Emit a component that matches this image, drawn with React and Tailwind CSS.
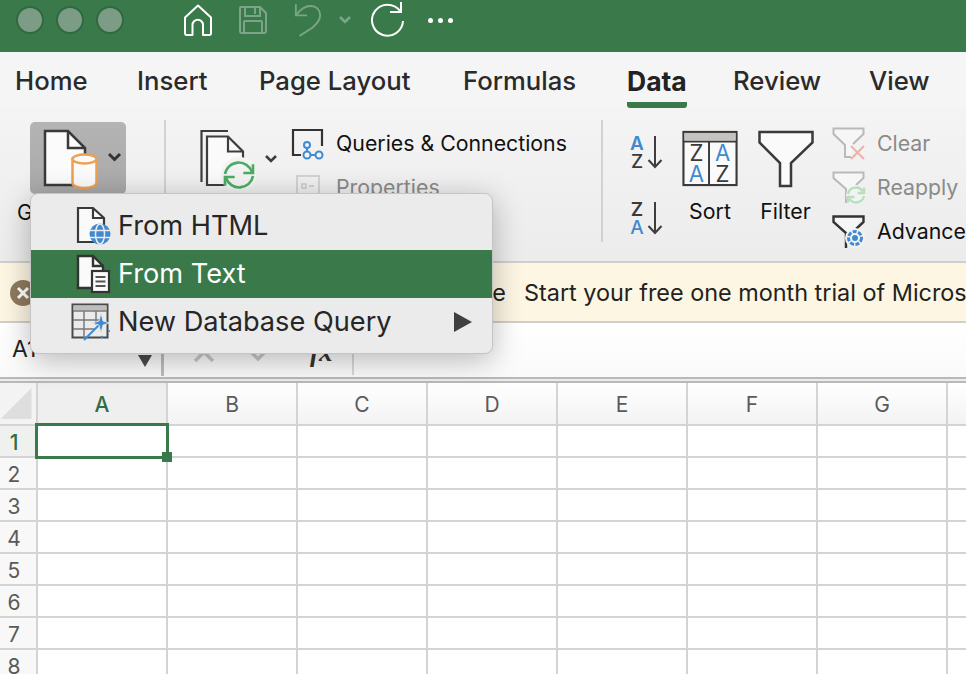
import React from 'react';

const tabs = [
  { label: 'Home', width: 'w-[122px]' },
  { label: 'Insert', width: 'w-[122px]' },
  { label: 'Page Layout', width: 'w-[204px]' },
  { label: 'Formulas', width: 'w-[164px]' },
  { label: 'Data', width: 'w-[106px]', active: true },
  { label: 'Review', width: 'w-[136px]' },
  { label: 'View', width: 'w-[80px]' },
];

const columns = ['A', 'B', 'C', 'D', 'E', 'F', 'G', 'H'];
const rows = [1, 2, 3, 4, 5, 6, 7, 8];

const Chevron = ({ className = '', color = '#3d3d3d' }) => (
  <svg width="14" height="10" viewBox="0 0 14 10" className={className}>
    <path d="M2 2l5 5 5-5" fill="none" stroke={color} strokeWidth="2.6" />
  </svg>
);

const SyncArrows = ({ cx, cy, r, color, width = 2.4 }) => {
  const h = r * 0.55;
  return (
    <g fill="none" stroke={color} strokeWidth={width}>
      <path d={`M${cx - r} ${cy - 1}A${r} ${r} 0 0 1 ${cx + r - 1} ${cy - 3}`} />
      <path d={`M${cx + r} ${cy + 1}A${r} ${r} 0 0 1 ${cx - r + 1} ${cy + 3}`} />
      <path d={`M${cx + r} ${cy - 3 - h}V${cy - 2}H${cx + r - h - 2}`} />
      <path d={`M${cx - r} ${cy + 3 + h}V${cy + 2}H${cx - r + h + 2}`} />
    </g>
  );
};

const TrafficLight = () => (
  <div className="w-[28px] h-[28px] rounded-full bg-[#7d9c85] border-2 border-[#2f6a40]"></div>
);

const HomeIcon = () => (
  <svg width="30" height="32" viewBox="0 0 30 32">
    <path d="M15 1.5L2 13.5V29.5a1.5 1.5 0 0 0 1.5 1.5H9.5V21a5 5 0 0 1 10.500 0V31h6.500a1.500 1.500 0 0 0 1.500-1.500V13.500Z" fill="none" stroke="#fff" strokeWidth="2" strokeLinejoin="round" />
  </svg>
);

const SaveIcon = () => (
  <svg width="30" height="30" viewBox="0 0 30 30" fill="none" stroke="#7ba586" strokeWidth="2">
    <path d="M3 2H22L28 8V26a2 2 0 0 1-2 2H4a2 2 0 0 1-2-2V3a1 1 0 0 1 1-1Z" />
    <path d="M7 2V11H22V2M17 3V9" />
    <path d="M6 28V17a1 1 0 0 1 1-1H23a1 1 0 0 1 1 1V28" />
  </svg>
);

const UndoIcon = () => (
  <svg width="28" height="36" viewBox="0 0 30 36" fill="none" stroke="#7ba586" strokeWidth="2">
    <path d="M2 1V13H14" />
    <path d="M2 13C7 6 13 3 18 3c6 0 10 4 10 10 0 5-3 8-8 13L6 35" />
  </svg>
);

const RedoIcon = () => (
  <svg width="34" height="36" viewBox="0 0 34 36" fill="none" stroke="#fff" strokeWidth="2">
    <path d="M29 9A15.500 15.500 0 1 0 32 19" />
    <path d="M30 0V10H19" />
  </svg>
);

const GetDataIcon = () => (
  <svg width="96" height="72" viewBox="0 0 96 72">
    <path d="M15 9H38L55 26V63H15Z" fill="#fbfbfb" stroke="#3a3a3a" strokeWidth="2.500" />
    <path d="M38 9V26H55" fill="none" stroke="#3a3a3a" strokeWidth="2.500" />
    <path d="M42.500 37V61c0 3 6 5 12 5s12-2 12-5V37Z" fill="#fbfbfb" stroke="#ee9f50" strokeWidth="2.500" />
    <ellipse cx="54.500" cy="37" rx="12" ry="4.500" fill="#fbfbfb" stroke="#ee9f50" strokeWidth="2.500" />
    <path d="M79 32l5.500 5.500L90 32" fill="none" stroke="#333" strokeWidth="3" />
  </svg>
);

const ConnectionsIcon = () => (
  <svg width="62" height="62" viewBox="0 0 62 62">
    <path d="M28 2H1.500V53" fill="none" stroke="#3d3d3d" strokeWidth="2.200" />
    <path d="M7 7.500H28L43 22.500V56H7Z" fill="#fafafa" stroke="#3d3d3d" strokeWidth="2.200" />
    <path d="M28 7.500V22.500H43" fill="none" stroke="#3d3d3d" strokeWidth="2.200" />
    <circle cx="39" cy="46" r="18" fill="#f3f3f3" />
    <SyncArrows cx={39} cy={46} r={14} color="#4cab62" width={2.600} />
  </svg>
);

const QueriesIcon = () => (
  <svg width="34" height="32" viewBox="0 0 34 32" fill="none">
    <path d="M31 18V2H2V27H10" stroke="#333" strokeWidth="2.200" />
    <g stroke="#3f8ad0" strokeWidth="2">
      <circle cx="16" cy="17" r="3" fill="#f3f3f3" />
      <circle cx="16" cy="27" r="3.500" fill="#f3f3f3" />
      <circle cx="28" cy="27" r="3.500" fill="#f3f3f3" />
      <path d="M16 20V23.500M19.500 27H24.500" />
    </g>
  </svg>
);

const PropertiesIcon = () => (
  <svg width="24" height="26" viewBox="0 0 24 26" fill="none" stroke="#c9c9c9" strokeWidth="1.500" className="ml-[5px]">
    <path d="M1 26V1H23V26" />
    <path d="M6 9H10V13H6ZM6 19H10V23H6ZM13 11H18M13 21H18" />
  </svg>
);

const SortLettersIcon = ({ top, bottom, topColor, bottomColor }) => (
  <svg width="36" height="38" viewBox="0 0 36 38">
    <text x="7" y="15" textAnchor="middle" fontFamily="Inter, sans-serif" fontWeight="600" fontSize="19" fill={topColor}>{top}</text>
    <text x="7" y="33" textAnchor="middle" fontFamily="Inter, sans-serif" fontWeight="500" fontSize="19" fill={bottomColor}>{bottom}</text>
    <path d="M25 1V32M18.500 25L25 32L31.500 25" fill="none" stroke="#3d3d3d" strokeWidth="2" />
  </svg>
);

const SortIcon = () => (
  <svg width="56" height="57" viewBox="0 0 58 58" fontFamily="Inter, sans-serif" fontSize="23" textAnchor="middle">
    <rect x="1.500" y="1.500" width="55" height="55" fill="#fafafa" stroke="#3a3a3a" strokeWidth="2.200" />
    <rect x="2.500" y="2.500" width="53" height="8" fill="#c4c3bf" />
    <path d="M1 11.500H57M28 11.500V57" stroke="#3a3a3a" strokeWidth="2" />
    <text x="15" y="32" fill="#3a3a3a">Z</text>
    <text x="15" y="53" fill="#3f8ad0">A</text>
    <text x="42" y="32" fill="#3f8ad0">A</text>
    <text x="42" y="53" fill="#3a3a3a">Z</text>
  </svg>
);

const FilterIcon = () => (
  <svg width="56" height="58" viewBox="0 0 56 58">
    <path d="M1.500 2H54.500V12.500L33 33V56H22V33L1.500 12.500Z" fill="#fafafa" stroke="#3a3a3a" strokeWidth="2.500" />
  </svg>
);

const ClearIcon = () => (
  <svg width="34" height="34" viewBox="0 0 34 34" fill="none">
    <path d="M19 30H13V18L1.500 7V1.500H31.500V7L21 17" stroke="#b9b9b9" strokeWidth="2" fill="#f6f6f6" />
    <path d="M19 19L32 32M32 19L19 32" stroke="#e8b4ac" strokeWidth="2" />
  </svg>
);

const ReapplyIcon = () => (
  <svg width="34" height="34" viewBox="0 0 34 34" fill="none">
    <path d="M14 32V18L1.500 7V1.500H31.500V7L24 14" stroke="#b9b9b9" strokeWidth="2" fill="#f6f6f6" />
    <circle cx="24" cy="24" r="10" fill="#f3f3f3" />
    <SyncArrows cx={24} cy={24} r={8} color="#b8dfc0" width={2.400} />
  </svg>
);

const AdvancedIcon = () => (
  <svg width="34" height="34" viewBox="0 0 34 34" fill="none">
    <path d="M14 33V18L1.500 7V1.500H31.500V7L24 14" stroke="#333" strokeWidth="2.400" fill="#f6f6f6" />
    <circle cx="23" cy="23" r="10" fill="#f3f3f3" />
    <circle cx="23" cy="23" r="6.500" stroke="#3f8ad0" strokeWidth="3" strokeDasharray="4 1.500" />
    <circle cx="23" cy="23" r="3" fill="#3f8ad0" />
  </svg>
);

const HtmlIcon = () => (
  <svg width="40" height="40" viewBox="0 0 40 40" fill="none">
    <path d="M3 2H18L29 12V36H3Z" fill="#fafafa" stroke="#3a3a3a" strokeWidth="2.200" />
    <path d="M18 2V12H29" stroke="#3a3a3a" strokeWidth="2.200" />
    <circle cx="25" cy="28" r="10.500" fill="#3f8ad0" />
    <g stroke="#ebebeb" strokeWidth="1.500">
      <ellipse cx="25" cy="28" rx="4.500" ry="10" />
      <path d="M15 24.500H35M15 31.500H35" />
    </g>
  </svg>
);

const TextDocIcon = () => (
  <svg width="40" height="40" viewBox="0 0 40 40" fill="none">
    <path d="M3 2H18L28 12V34H3Z" fill="#fafafa" stroke="#333" strokeWidth="2.400" />
    <path d="M18 2V12H28" stroke="#333" strokeWidth="2.400" />
    <rect x="17" y="17" width="17" height="21" fill="#fafafa" stroke="#333" strokeWidth="2.200" />
    <path d="M20.500 23H30.500M20.500 27.500H30.500M20.500 32H30.500" stroke="#555" strokeWidth="2" />
  </svg>
);

const QueryIcon = () => (
  <svg width="40" height="38" viewBox="0 0 40 38" fill="none" className="-ml-[4px]">
    <rect x="1.500" y="1.500" width="35" height="33" fill="#ebebeb" stroke="#4a4a4a" strokeWidth="2" />
    <rect x="2.500" y="2.500" width="33" height="5" fill="#bdbdbd" />
    <path d="M2 8H36M2 17H30M2 26H24M13 8V35M25 8V22" stroke="#7a7a7a" strokeWidth="1.500" />
    <path d="M13 37L29 21" stroke="#3f8ad0" strokeWidth="2" />
    <path d="M30 10L32 18L39 20L32 22L30 30L28 22L21 20L28 18Z" fill="#3f8ad0" stroke="#ebebeb" strokeWidth="0.800" />
    <circle cx="31" cy="34" r="1.200" fill="#3f8ad0" />
    <circle cx="38" cy="28" r="1" fill="#3f8ad0" />
  </svg>
);

const MenuItem = ({ icon: Icon, label, active = false, hasArrow = false }) => (
  <div className={`h-[48px] flex items-center pl-[44px] pr-[20px] ${active ? 'bg-[#3a7a4a] text-white' : 'text-[#262626]'}`}>
    <div className="w-[43px] flex-none">
      <Icon />
    </div>
    <span className="flex-1 text-[27.2px] whitespace-nowrap">{label}</span>
    {hasArrow && (
      <svg width="18" height="20" viewBox="0 0 18 20">
        <path d="M0 0L18 10L0 20Z" fill="#3f3f3f" />
      </svg>
    )}
  </div>
);

const SmallAction = ({ icon: Icon, label, muted = false }) => (
  <div className="h-[44px] flex items-center">
    <div className="w-[45px] flex-none">
      <Icon />
    </div>
    <span className={`text-[21.300px] whitespace-nowrap ${muted ? 'text-[#8a8a8a]' : 'text-[#111]'}`}>{label}</span>
  </div>
);

function App() {
  return (
    <div className="relative w-[966px] h-[674px] overflow-hidden bg-white font-[Inter,sans-serif]">
      {/* Title bar */}
      <header className="h-[52px] bg-[#3a7a4a] flex items-center pl-[16px] pb-[12px]">
        <div className="flex gap-[12px]">
          <TrafficLight />
          <TrafficLight />
          <TrafficLight />
        </div>
        <div className="ml-[59px] flex items-center">
          <HomeIcon />
          <div className="ml-[25px]"><SaveIcon /></div>
          <div className="ml-[26px]"><UndoIcon /></div>
          <Chevron className="ml-[16px]" color="#7ba586" />
          <div className="ml-[19px]"><RedoIcon /></div>
          <div className="ml-[23px] flex gap-[5px]">
            <div className="w-[5px] h-[5px] rounded-full bg-white"></div>
            <div className="w-[5px] h-[5px] rounded-full bg-white"></div>
            <div className="w-[5px] h-[5px] rounded-full bg-white"></div>
          </div>
        </div>
      </header>

      {/* Tabs */}
      <nav className="h-[56px] bg-[#f5f5f5] flex pl-[15px] pt-[13px]">
        {tabs.map((tab) => (
          <div key={tab.label} className={`${tab.width} flex-none`}>
            <div className={`inline-block h-[43px] leading-[32px] whitespace-nowrap ${tab.active ? 'text-[26.500px] font-bold text-[#222] border-b-[6px] border-[#3a7a4a] rounded-b-[3px]' : 'text-[25.700px] font-medium text-[#2a2a2a]'}`}>
              {tab.label}
            </div>
          </div>
        ))}
      </nav>

      {/* Ribbon */}
      <section className="h-[153px] flex bg-gradient-to-b from-[#f4f4f4] to-[#ececec]">
        <div className="w-[164px] flex-none pl-[17px] pt-[14px]">
          <div className="ml-[13px] w-[96px] h-[72px] rounded-[5px] bg-gradient-to-b from-[#b4b4b4] to-[#a9a9a9]">
            <GetDataIcon />
          </div>
          <p className="mt-[4px] text-[21px] leading-[30px] text-[#111] whitespace-nowrap">Get External Data</p>
        </div>
        <div className="w-[2px] h-[122px] mt-[12px] bg-[#d2d2d2] flex-none"></div>

        <div className="w-[435px] flex-none flex pl-[34px] pt-[21px]">
          <ConnectionsIcon />
          <Chevron className="ml-[2px] mt-[25px]" />
          <div className="ml-[13px] -mt-[7px]">
            <SmallAction icon={QueriesIcon} label="Queries & Connections" />
            <SmallAction icon={PropertiesIcon} label="Properties" muted />
          </div>
        </div>
        <div className="w-[2px] h-[122px] mt-[12px] bg-[#d2d2d2] flex-none"></div>

        <div className="flex-none flex pl-[27px] pt-[22px]">
          <div className="w-[52px] mt-[5px] flex flex-col gap-[28px]">
            <SortLettersIcon top="A" bottom="Z" topColor="#3f8ad0" bottomColor="#3a3a3a" />
            <SortLettersIcon top="Z" bottom="A" topColor="#3a3a3a" bottomColor="#3f8ad0" />
          </div>
          <div className="w-[56px] flex flex-col items-center">
            <SortIcon />
            <span className="mt-[9px] text-[21.300px] leading-[30px] text-[#111]">Sort</span>
          </div>
          <div className="w-[94px] pl-[1px] flex flex-col items-center">
            <FilterIcon />
            <span className="mt-[8px] text-[21.300px] leading-[30px] text-[#111]">Filter</span>
          </div>
          <div className="-mt-[8px]">
            <SmallAction icon={ClearIcon} label="Clear" muted />
            <SmallAction icon={ReapplyIcon} label="Reapply" muted />
            <SmallAction icon={AdvancedIcon} label="Advanced" />
          </div>
        </div>
      </section>

      {/* Upgrade banner */}
      <section className="h-[62px] flex items-center pt-[1px] bg-[#fdf6e3] border-y-2 border-[#d0cfcb]">
        <div className="ml-[10px] w-[26px] h-[26px] rounded-full bg-[#8f7a5c] flex-none flex items-center justify-center">
          <svg width="14" height="14" viewBox="0 0 14 14">
            <path d="M2 2L12 12M12 2L2 12" stroke="#fff" strokeWidth="3" />
          </svg>
        </div>
        <div className="w-[470px] flex-none flex justify-end text-[23.400px] text-[#222] whitespace-nowrap">
          <span>Try Microsoft 365 Free</span>
        </div>
        <span className="ml-[18px] text-[23.400px] text-[#222] whitespace-nowrap">Start your free one month trial of Microsoft 365</span>
      </section>

      {/* Formula bar */}
      <section className="h-[54px] flex items-end bg-gradient-to-b from-white to-[#fafafa] pb-[1px]">
        <div className="w-[161px] flex-none flex items-start self-stretch pl-[12px] pt-[10px]">
          <span className="text-[23px] leading-[32px] text-[#222]">A1</span>
          <svg width="14" height="12" viewBox="0 0 14 12" className="ml-[102px] mt-[22px]">
            <path d="M0 0H14L7 12Z" fill="#4a4a4a" />
          </svg>
        </div>
        <div className="w-[3px] h-[24px] bg-[#bdbdbd] flex-none"></div>
        <div className="flex-none flex items-center self-stretch pl-[28px] pt-[5px]">
          <svg width="24" height="24" viewBox="0 0 24 24">
            <path d="M3 3L21 21M21 3L3 21" stroke="#c9c9c9" strokeWidth="3.500" />
          </svg>
          <svg width="24" height="24" viewBox="0 0 24 24" className="ml-[30px]">
            <path d="M3 10L12 19L21 10" fill="none" stroke="#c9c9c9" strokeWidth="3.500" />
          </svg>
          <span className="ml-[40px] font-['Liberation_Serif',serif] italic font-bold text-[27px] text-[#333]">fx</span>
          <div className="ml-[19px] w-[2px] h-[24px] self-end mb-[1px] bg-[#d8d8d8]"></div>
        </div>
      </section>
      <div className="h-[6px] border-y-2 border-[#b9b9b9] bg-[#ececec]"></div>

      {/* Sheet */}
      <div className="grid grid-cols-[38px_repeat(8,130px)] grid-rows-[43px_repeat(8,32px)]">
        <div className="bg-[#f3f3f3] border-r-2 border-b-2 border-[#d4d4d4] flex items-center justify-center">
          <div className="w-[31px] h-[31px] -ml-[4px] bg-[#dedede] [clip-path:polygon(100%_0,100%_100%,0_100%)]"></div>
        </div>
        {columns.map((col, i) => (
          <div
            key={col}
            className={`border-r-2 border-b-2 border-[#d4d4d4] flex items-center justify-center pt-[2px] text-[21px] ${i === 0 ? 'bg-[#efefef] text-[#2f6f43] font-medium' : 'bg-gradient-to-b from-white to-[#f3f3f3] text-[#5a5a5a]'}`}
          >
            {col}
          </div>
        ))}
        {rows.map((row) => (
          <React.Fragment key={row}>
            <div className={`border-r-2 border-b-2 border-[#d4d4d4] flex items-center justify-center pr-[8px] pt-[3px] text-[21px] ${row === 1 ? 'bg-[#eef1ee] text-[#2f6f43] font-medium' : 'bg-[#f8f8f8] text-[#5a5a5a]'} `}>
              {row}
            </div>
            {columns.map((col) => (
              <div key={col} className="border-r-2 border-b-2 border-[#d4d4d4]"></div>
            ))}
          </React.Fragment>
        ))}
      </div>

      {/* Selected cell */}
      <div className="absolute left-[35px] top-[423px] w-[134px] h-[36px] border-[3px] border-[#3a7a4a]"></div>
      <div className="absolute left-[162px] top-[452px] w-[10px] h-[10px] bg-[#3a7a4a]"></div>

      {/* Get Data menu */}
      <div className="absolute left-[30px] top-[193px] w-[463px] h-[161px] py-[8px] rounded-[8px] bg-[#ebebeb] border border-[#c4c4c4] shadow-[0_6px_30px_rgba(0,0,0,0.28)] overflow-hidden">
        <MenuItem icon={HtmlIcon} label="From HTML" />
        <MenuItem icon={TextDocIcon} label="From Text" active />
        <MenuItem icon={QueryIcon} label="New Database Query" hasArrow />
      </div>
    </div>
  );
}

export default App;
